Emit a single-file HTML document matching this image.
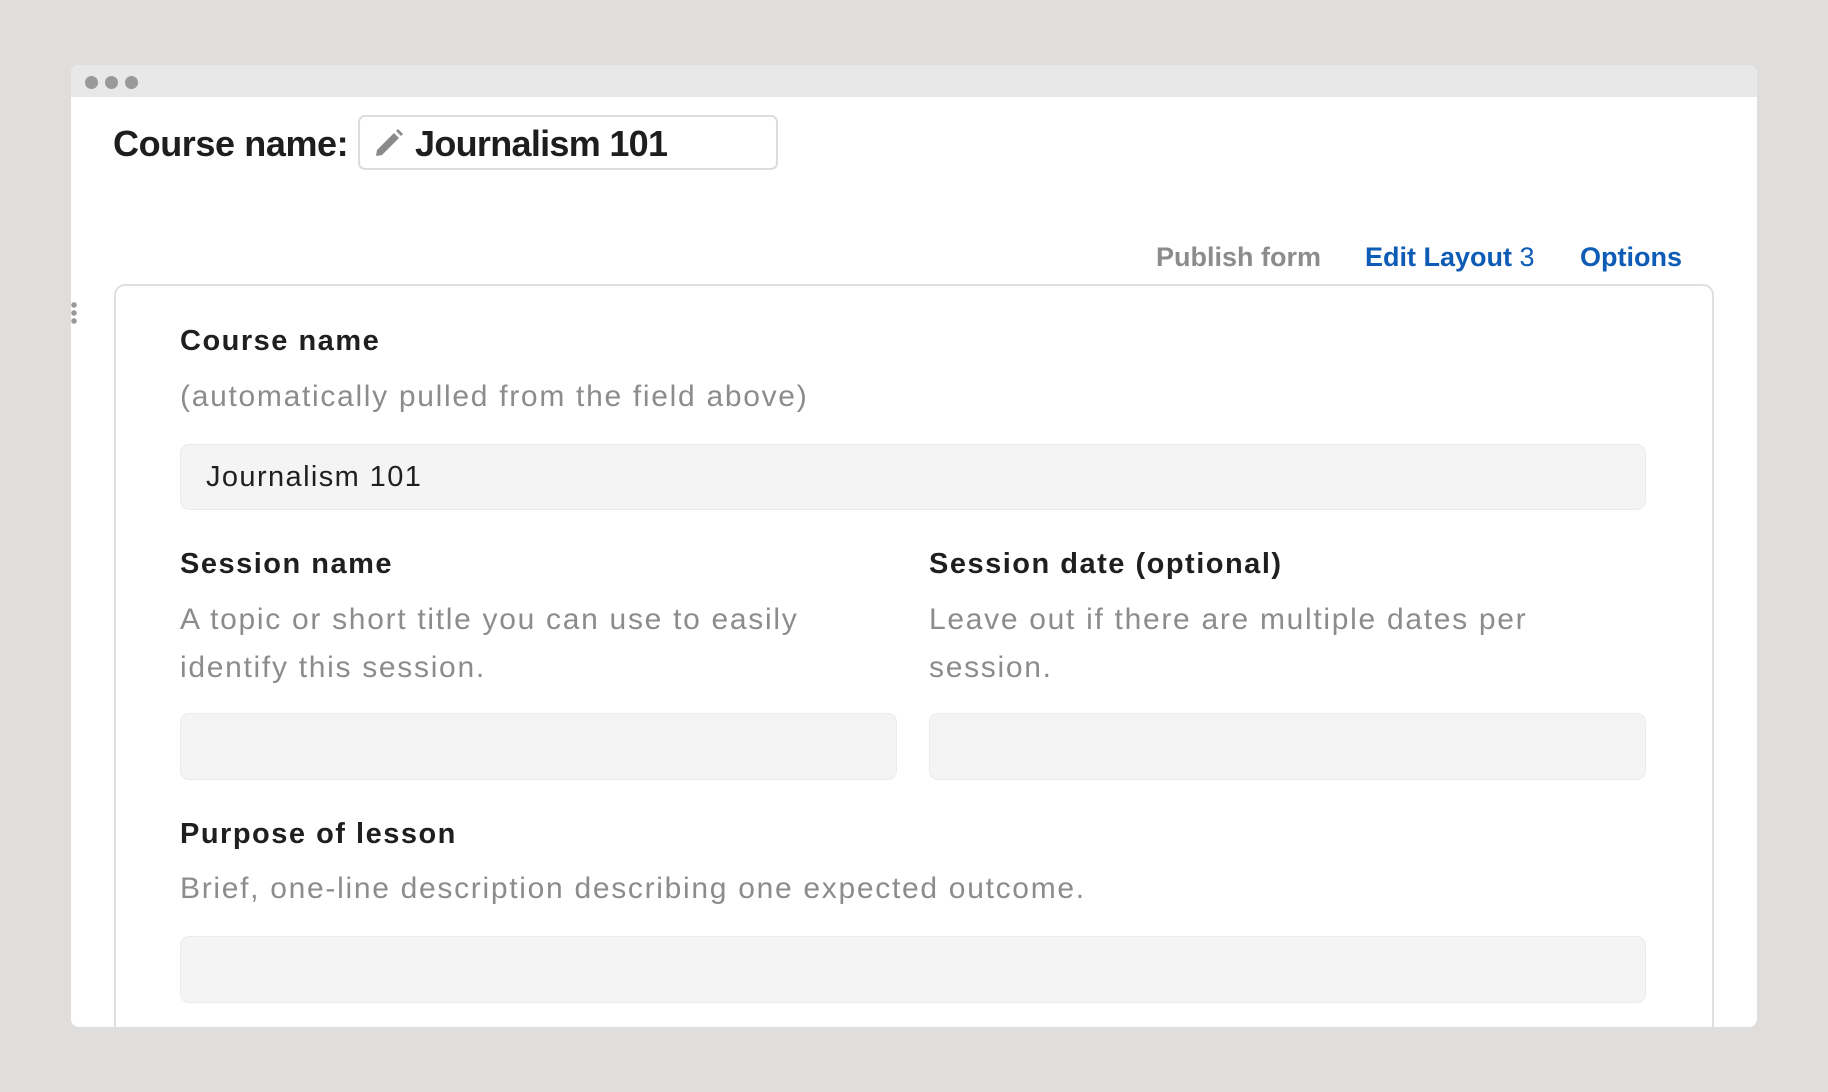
<!DOCTYPE html>
<html><head><meta charset="utf-8"><style>
*{margin:0;padding:0;box-sizing:border-box}
body{width:1828px;height:1092px;background:#dfdedc;font-family:"Liberation Sans",sans-serif;position:relative;overflow:hidden}
.win{position:absolute;left:71px;top:65px;width:1686px;height:962px;background:#fff;border-radius:8px;overflow:hidden}
.bar{position:absolute;left:0;top:0;width:100%;height:32px;background:#e8e8e8}
.dot{position:absolute;top:11px;width:13px;height:13px;border-radius:50%;background:#999}
.a{position:absolute;white-space:nowrap}
.lab{font-size:29px;font-weight:bold;color:#1f1f1f;letter-spacing:1.5px}
.help{font-size:30px;color:#8c8c8c;line-height:48px;letter-spacing:1.7px}
.inp{position:absolute;background:#f4f4f4;border:1px solid #ebebeb;border-radius:9px}
</style></head><body>
<div class="win">
<div class="bar"></div>
<div class="dot" style="left:14px"></div><div class="dot" style="left:34px"></div><div class="dot" style="left:54px"></div>
<div class="a" style="left:42px;top:58px;font-size:36px;font-weight:bold;color:#1e1e1e;letter-spacing:-0.4px">Course name:</div>
<div style="position:absolute;left:287px;top:50px;width:420px;height:55px;border:2px solid #ddd;border-radius:7px"></div>
<svg style="position:absolute;left:302px;top:62px" width="32" height="32" viewBox="0 0 32 32"><path d="M3 29 L4 23 L21 6 L26 11 L9 28 Z" fill="#8a8a8a"/><path d="M23 4 L25 2 L30 7 L28 9 Z" fill="#8a8a8a"/></svg>
<div class="a" style="left:344px;top:58px;font-size:36px;font-weight:bold;color:#1e1e1e;letter-spacing:-0.7px">Journalism 101</div>
<div class="a" style="left:1085px;top:177px;font-size:27px;font-weight:bold;color:#8c8c8c">Publish form</div>
<div class="a" style="left:1294px;top:177px;font-size:27px;font-weight:bold;color:#0e5cb5">Edit Layout <span style="font-weight:normal">3</span></div>
<div class="a" style="left:1509px;top:177px;font-size:27px;font-weight:bold;color:#0e5cb5">Options</div>
<div style="position:absolute;left:43px;top:219px;width:1600px;height:800px;border:2px solid #e0e0e0;border-radius:11px"></div>
<div style="position:absolute;left:0;top:236px;width:6px;height:24px;background:radial-gradient(circle,#999 2.5px,transparent 3px) 0 0/6px 8px"></div>
<div class="a lab" style="left:109px;top:260px">Course name</div>
<div class="a help" style="left:109px;top:308px">(automatically pulled from the field above)</div>
<div class="inp" style="left:109px;top:379px;width:1466px;height:66px"></div>
<div class="a" style="left:135px;top:396px;font-size:29px;color:#1f1f1f;letter-spacing:1.4px">Journalism 101</div>
<div class="a lab" style="left:109px;top:483px">Session name</div>
<div class="a help" style="left:109px;top:531px">A topic or short title you can use to easily<br>identify this session.</div>
<div class="a lab" style="left:858px;top:483px">Session date (optional)</div>
<div class="a help" style="left:858px;top:531px">Leave out if there are multiple dates per<br>session.</div>
<div class="inp" style="left:109px;top:648px;width:717px;height:67px"></div>
<div class="inp" style="left:858px;top:648px;width:717px;height:67px"></div>
<div class="a lab" style="left:109px;top:753px">Purpose of lesson</div>
<div class="a help" style="left:109px;top:800px">Brief, one-line description describing one expected outcome.</div>
<div class="inp" style="left:109px;top:871px;width:1466px;height:67px"></div>
</div>
</body></html>
